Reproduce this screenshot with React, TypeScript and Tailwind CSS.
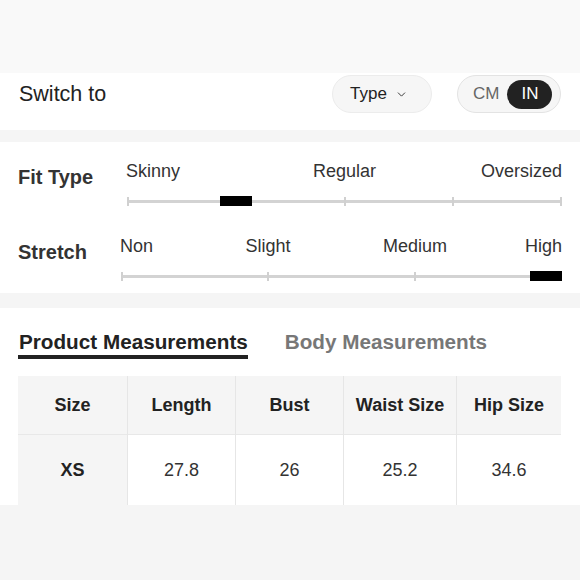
import { ChevronDown } from 'lucide-react';

const fitMarks = [0, 50, 75, 100];
const stretchMarks = [0, 100 / 3, 200 / 3, 100];

const fitLabels = [
  { text: 'Skinny', pos: 0 },
  { text: 'Regular', pos: 50 },
  { text: 'Oversized', pos: 100 },
];

const stretchLabels = [
  { text: 'Non', pos: 0 },
  { text: 'Slight', pos: 100 / 3 },
  { text: 'Medium', pos: 200 / 3 },
  { text: 'High', pos: 100 },
];

const columns = [
  { name: 'Size', width: 'w-[109px]', value: 'XS' },
  { name: 'Length', width: 'w-[108px]', value: '27.8' },
  { name: 'Bust', width: 'w-[108px]', value: '26' },
  { name: 'Waist Size', width: 'w-[113px]', value: '25.2' },
  { name: 'Hip Size', width: 'w-[105px]', value: '34.6' },
];

interface ScaleProps {
  labels: { text: string; pos: number }[];
  marks: number[];
  thumb: number; // posició del cursor, en %
}

// Escala amb etiquetes a sobre i una barra amb marques
const Scale = ({ labels, marks, thumb }: ScaleProps) => {
  return (
    <div className="flex-1 flex flex-col">
      <div className="relative h-[22px] text-[18px] leading-[22px] text-[#333]">
        {labels.map((l) => (
          <span
            key={l.text}
            className="absolute top-0 whitespace-nowrap"
            style={{
              left: `${l.pos}%`,
              transform:
                l.pos === 0 ? 'translateX(-1px)' : l.pos === 100 ? 'translateX(-100%)' : 'translateX(-50%)',
            }}
          >
            {l.text}
          </span>
        ))}
      </div>
      <div className="relative mt-[13px] h-[12px]">
        <div className="absolute left-0 right-0 top-[5px] h-[3px] bg-[#d3d3d3]" />
        {marks.map((m) => (
          <div
            key={m}
            className="absolute top-[2px] h-[9px] w-[2px] bg-[#d0d0d0]"
            style={{ left: `calc(${m}% - ${m === 100 ? 2 : m === 0 ? 0 : 1}px)` }}
          />
        ))}
        <div
          className="absolute top-[1px] h-[10px] w-[32px] bg-black"
          style={{
            left: `${thumb}%`,
            transform: thumb === 100 ? 'translateX(-100%)' : 'translateX(-50%)',
          }}
        />
      </div>
    </div>
  );
};

export default function App() {
  return (
    <div className="w-[580px] h-[580px] overflow-hidden bg-[#f5f5f5] font-['Liberation_Sans',Arial,sans-serif] text-[#222]">
      <div className="h-[73px] bg-[#f9f9f9]" />

      {/* Unitats */}
      <div className="h-[57px] bg-white pt-[2px] pl-[19px] pr-[19px] flex items-start justify-between">
        <div className="h-[38px] flex items-center text-[21.5px] text-[#222]">Switch to</div>
        <div className="flex items-center gap-[25px]">
          <button className="h-[38px] w-[100px] rounded-full border border-[#ececec] bg-[#f6f6f6] flex items-center pl-[17px] gap-[8px] text-[17px] text-[#222]">
            Type
            <ChevronDown size={13} strokeWidth={1.75} className="text-[#333]" />
          </button>
          <div className="h-[38px] w-[104px] rounded-full border border-[#e3e3e3] bg-[#f6f6f6] flex items-center pl-[15px] pr-[7px] gap-[8px] text-[17px]">
            <span className="text-[#666]">CM</span>
            <span className="h-[29px] w-[45px] rounded-full bg-[#222] text-white flex items-center justify-center">
              IN
            </span>
          </div>
        </div>
      </div>

      {/* Ajust i elasticitat */}
      <div className="mt-[12px] h-[151px] bg-white pt-[18px] pl-[18px] pr-[18px]">
        <div className="flex items-start">
          <div className="w-[109px] mt-[5px] text-[20px] leading-[24px] font-bold text-[#333]">Fit Type</div>
          <Scale labels={fitLabels} marks={fitMarks} thumb={25} />
        </div>
        <div className="flex items-start mt-[28px]">
          <div className="w-[103px] mt-[5px] text-[20px] leading-[24px] font-bold text-[#333]">Stretch</div>
          <Scale labels={stretchLabels} marks={stretchMarks} thumb={100} />
        </div>
      </div>

      {/* Mesures */}
      <div className="mt-[15px] h-[197px] bg-white pt-[22px] pl-[18px] pr-[19px]">
        <div className="flex items-start gap-[37px] text-[20.7px] leading-[24px] font-bold">
          <span className="border-b-4 border-[#222] pb-[1px] pl-[1px] text-[#222]">Product Measurements</span>
          <span className="text-[#777]">Body Measurements</span>
        </div>
        <div className="mt-[17px] flex">
          {columns.map((c, i) => (
            <div key={c.name} className={`${c.width} flex flex-col ${i > 0 ? 'border-l border-[#e6e6e6]' : ''}`}>
              <div className="h-[59px] bg-[#f5f5f5] border-b border-[#e8e8e8] flex items-center justify-center text-[18px] font-bold text-[#222]">
                {c.name}
              </div>
              <div
                className={`h-[70px] flex items-center justify-center text-[18px] ${
                  i === 0 ? 'bg-[#f5f5f5] font-bold text-[#222]' : 'bg-white text-[#333]'
                }`}
              >
                {c.value}
              </div>
            </div>
          ))}
        </div>
      </div>
    </div>
  );
}
